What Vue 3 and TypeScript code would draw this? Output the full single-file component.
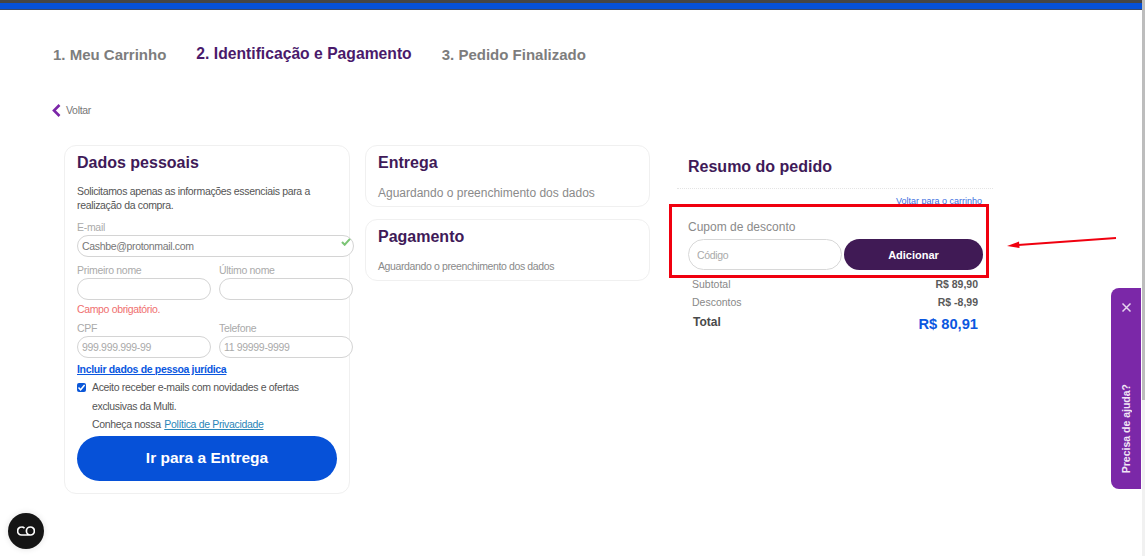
<template>
  <div class="page">
    <div class="top-bar"></div>

    <!-- etapas -->
    <nav class="steps">
      <span class="step">1. Meu Carrinho</span>
      <span class="step active">2. Identificação e Pagamento</span>
      <span class="step">3. Pedido Finalizado</span>
    </nav>

    <a class="back">
      <svg width="9" height="13" viewBox="0 0 9 13"><path d="M7.5 1 2 6.5 7.5 12" fill="none" stroke="#7b26a8" stroke-width="2.6" /></svg>
      Voltar
    </a>

    <div class="columns">
      <section class="card personal">
        <h2>Dados pessoais</h2>
        <p class="intro">Solicitamos apenas as informações essenciais para a realização da compra.</p>

        <label class="field-label email-label">E-mail</label>
        <div class="email-wrap">
          <input class="input email" :value="email" readonly />
          <svg class="check" width="10" height="8" viewBox="0 0 11 9"><path d="M1 4.500 4 7.500 10 1" fill="none" stroke="#7cc576" stroke-width="2.400" /></svg>
        </div>

        <div class="row names">
          <div class="col">
            <label class="field-label">Primeiro nome</label>
            <input class="input" />
          </div>
          <div class="col">
            <label class="field-label">Último nome</label>
            <input class="input" />
          </div>
        </div>
        <p class="error">Campo obrigatório.</p>

        <div class="row docs">
          <div class="col">
            <label class="field-label">CPF</label>
            <input class="input" placeholder="999.999.999-99" />
          </div>
          <div class="col">
            <label class="field-label">Telefone</label>
            <input class="input" placeholder="11 99999-9999" />
          </div>
        </div>

        <a class="company-link">Incluir dados de pessoa jurídica</a>

        <div class="consent">
          <span class="checkbox">
            <svg width="9" height="9" viewBox="0 0 9 9"><path d="M1.500 4.500 3.600 6.800 7.600 2" fill="none" stroke="#fff" stroke-width="1.500" /></svg>
          </span>
          <div class="consent-text">
            <p>Aceito receber e-mails com novidades e ofertas</p>
            <p>exclusivas da Multi.</p>
            <p>Conheça nossa <a class="privacy">Política de Privacidade</a></p>
          </div>
        </div>

        <button class="btn-next">Ir para a Entrega</button>
      </section>

      <div class="middle">
        <section class="card small">
          <h2>Entrega</h2>
          <p class="waiting large">Aguardando o preenchimento dos dados</p>
        </section>
        <section class="card small">
          <h2>Pagamento</h2>
          <p class="waiting">Aguardando o preenchimento dos dados</p>
        </section>
      </div>

      <aside class="summary">
        <h2>Resumo do pedido</h2>
        <a class="cart-link">Voltar para o carrinho</a>

        <div class="coupon">
          <label>Cupom de desconto</label>
          <div class="coupon-row">
            <input class="coupon-input" placeholder="Código" />
            <button class="btn-add">Adicionar</button>
          </div>
        </div>

        <div class="totals">
          <div v-for="line in lines" :key="line.label" class="line">
            <span>{{ line.label }}</span>
            <b>{{ line.value }}</b>
          </div>
          <div class="line total">
            <span>Total</span>
            <b>R$ 80,91</b>
          </div>
        </div>

        <!-- anotação por cima do cupom -->
        <div class="red-box"></div>
      </aside>
    </div>

    <svg class="arrow" width="112" height="14" viewBox="0 0 112 14">
      <path d="M110 1 12 8" stroke="#f0000f" stroke-width="1.800" />
      <path d="M1 9 13 4.500 13.500 11Z" fill="#f0000f" />
    </svg>

    <div class="help-tab">
      <svg width="11" height="11" viewBox="0 0 11 11"><path d="M1.500 1.500l8 8M9.500 1.500l-8 8" stroke="#e6d6ee" stroke-width="1.500" /></svg>
      <span>Precisa de ajuda?</span>
    </div>

    <div class="chat-btn">
      <svg width="18" height="10" viewBox="0 0 18 10">
        <path d="M7.500 2.200A3.600 3.600 0 0 0 4.600 1a4 4 0 0 0 0 8h8.800a4 4 0 0 0 0-8 4 4 0 0 0 0 8" fill="none" stroke="#fff" stroke-width="1.700" />
      </svg>
    </div>

    <div class="scrollbar"><div class="thumb"></div></div>
  </div>
</template>

<script setup lang="ts">
const email = 'Cashbe@protonmail.com'

/** Linhas do resumo */
const lines = [
  { label: 'Subtotal', value: 'R$ 89,90' },
  { label: 'Descontos', value: 'R$ -8,99' },
]
</script>

<style>
html,
body {
  margin: 0;
  overflow: hidden;
  background: #fff;
}
</style>

<style scoped>
.page {
  position: relative;
  width: 1145px;
  height: 556px;
  overflow: hidden;
  background: #fff;
  font-family: 'Liberation Sans', Arial, sans-serif;
  color: #555;
}

.top-bar {
  height: 6px;
  background: #0651d8;
  border-top: 3px solid #454545;
  border-bottom: 1px solid #3a4a6a;
}

.steps {
  display: flex;
  gap: 30px;
  padding: 35px 0 0 53px;
  font-size: 15px;
  line-height: 20px;
  font-weight: 700;
}

.step {
  color: #7d7d7d;
}

.step.active {
  color: #4a1a6b;
  font-size: 15.7px;
  margin-top: -1px;
}

.back {
  display: flex;
  align-items: center;
  gap: 5px;
  margin: 38px 0 0 52px;
  height: 14px;
  font-size: 10.5px;
  letter-spacing: -0.3px;
  color: #777;
}

h2 {
  margin: 0;
  font-size: 16px;
  line-height: 20px;
  font-weight: 700;
  color: #401a58;
}

p {
  margin: 0;
}

.columns {
  display: flex;
  gap: 15px;
  margin: 28px 0 0 64px;
  align-items: flex-start;
}

.card {
  box-sizing: border-box;
  width: 285px;
  border: 1px solid #f0f0f0;
  border-radius: 12px;
  background: #fff;
  padding: 7px 12px;
}

.card.personal {
  width: 286px;
  height: 349px;
}

.intro {
  margin-top: 11px;
  font-size: 10.5px;
  letter-spacing: -0.33px;
  line-height: 14px;
  color: #555;
}

.field-label {
  display: block;
  font-size: 10.5px;
  letter-spacing: -0.3px;
  line-height: 12px;
  color: #aaa;
}

.email-label {
  margin-top: 9px;
}

.email-wrap {
  position: relative;
  width: 277px;
  margin-top: 2px;
}

.input {
  display: block;
  box-sizing: border-box;
  width: 134px;
  height: 22px;
  border: 1px solid #d4d4d4;
  border-radius: 11px;
  padding: 0 4px;
  outline: none;
  background: #fff;
  font: 10.5px 'Liberation Sans', Arial, sans-serif;
  letter-spacing: -0.33px;
  color: #777;
}

.input::placeholder {
  color: #aaa;
}

.input.email {
  width: 277px;
}

.check {
  position: absolute;
  right: 3px;
  top: 3px;
}

.row {
  display: flex;
  gap: 8px;
  width: 276px;
}

.col {
  display: flex;
  flex-direction: column;
  gap: 2px;
}

.names {
  margin-top: 7px;
}

.error {
  margin-top: 3px;
  font-size: 10.5px;
  letter-spacing: -0.35px;
  line-height: 12px;
  color: #ef6f6f;
}

.docs {
  margin-top: 7px;
}

.company-link {
  display: block;
  margin-top: 5px;
  font-size: 10.5px;
  letter-spacing: -0.33px;
  line-height: 12px;
  font-weight: 700;
  color: #0b57e0;
  text-decoration: underline;
}

.consent {
  display: flex;
  gap: 6px;
  margin-top: 3px;
}

.checkbox {
  display: flex;
  align-items: center;
  justify-content: center;
  flex: none;
  width: 9px;
  height: 9px;
  margin-top: 5px;
  border-radius: 2px;
  background: #0b57d8;
}

.consent-text {
  font-size: 10.5px;
  letter-spacing: -0.33px;
  line-height: 18.5px;
  color: #555;
}

.privacy {
  margin-left: 1px;
  color: #2a86b8;
  text-decoration: underline;
}

.btn-next {
  display: block;
  width: 260px;
  height: 45px;
  margin-top: 2px;
  border: none;
  border-radius: 23px;
  background: #0651d8;
  color: #fff;
  font: 700 15.5px 'Liberation Sans', Arial, sans-serif;
}

.middle {
  display: flex;
  flex-direction: column;
  gap: 12px;
}

.card.small {
  height: 62px;
}

.waiting {
  margin-top: 12px;
  font-size: 10.5px;
  letter-spacing: -0.38px;
  line-height: 14px;
  color: #8a8a8a;
}

.waiting.large {
  font-size: 12px;
  letter-spacing: 0;
  margin-top: 13px;
}

.summary {
  position: relative;
  box-sizing: border-box;
  width: 316px;
  margin-left: 12px;
}

.summary h2 {
  box-sizing: content-box;
  height: 31px;
  padding: 12px 0 0 11px;
  border-bottom: 1px dotted #e4e4e4;
}

.cart-link {
  display: block;
  margin-top: 7px;
  padding-right: 11px;
  text-align: right;
  font-size: 9px;
  line-height: 11px;
  color: #3d6fe0;
}

.coupon {
  position: relative;
  margin-top: 13px;
  padding-left: 11px;
}

.coupon label {
  display: block;
  font-size: 12px;
  line-height: 14px;
  color: #8a8a8a;
}

.coupon-row {
  display: flex;
  gap: 2px;
  margin-top: 5px;
}

.coupon-input {
  box-sizing: border-box;
  width: 154px;
  height: 31px;
  border: 1px solid #d8d8d8;
  border-radius: 16px;
  padding: 0 8px;
  outline: none;
  font: 10.5px 'Liberation Sans', Arial, sans-serif;
  letter-spacing: -0.33px;
}

.coupon-input::placeholder {
  color: #aaa;
}

.btn-add {
  width: 139px;
  height: 31px;
  border: none;
  border-radius: 16px;
  background: #401a55;
  color: #fff;
  font: 700 11px 'Liberation Sans', Arial, sans-serif;
}

.totals {
  margin-top: 5px;
  padding: 0 15px 0 15px;
}

.line {
  display: flex;
  justify-content: space-between;
  align-items: center;
  height: 18px;
  font-size: 10.5px;
  color: #888;
}

.line b {
  color: #5a5a5a;
}

.line.total {
  height: 20px;
  margin-top: 3px;
  font-size: 12px;
  font-weight: 700;
  color: #4a4a4a;
}

.line.total span {
  margin-top: -4px;
  margin-left: 1px;
}

.line.total b {
  font-size: 14.7px;
  color: #0b57e0;
}

.red-box {
  position: absolute;
  left: -8px;
  top: 59px;
  width: 320px;
  height: 74px;
  box-sizing: border-box;
  border: 3px solid #f0000f;
}

.arrow {
  position: absolute;
  left: 1006px;
  top: 237px;
}

.help-tab {
  position: absolute;
  left: 1111px;
  top: 288px;
  box-sizing: border-box;
  width: 30px;
  height: 201px;
  padding: 14px 0 16px;
  border-radius: 8px 0 0 8px;
  background: #7b28a8;
  display: flex;
  flex-direction: column;
  align-items: center;
  justify-content: space-between;
}

.help-tab span {
  writing-mode: vertical-rl;
  transform: rotate(180deg);
  font-size: 10.5px;
  font-weight: 700;
  color: #f1e6f6;
}

.chat-btn {
  position: absolute;
  left: 8px;
  top: 513px;
  width: 36px;
  height: 36px;
  border-radius: 50%;
  background: #151515;
  box-shadow: 0 0 6px rgba(0, 0, 0, 0.12);
  display: flex;
  align-items: center;
  justify-content: center;
}

.scrollbar {
  position: absolute;
  top: 0;
  right: 0;
  width: 3px;
  height: 556px;
  background: #f1f1f1;
}

.thumb {
  height: 400px;
  background: #bdbdbd;
}
</style>
